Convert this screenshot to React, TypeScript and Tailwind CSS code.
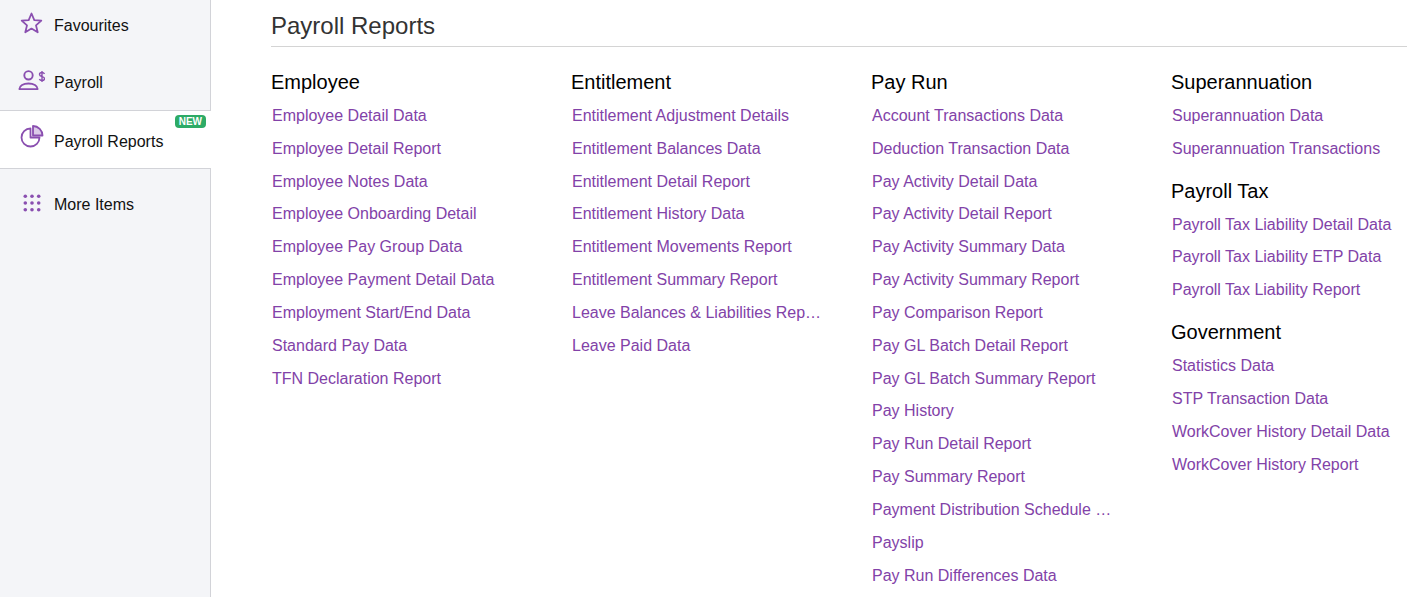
import React from 'react';

const groups: { title: string; links: string[] }[][] = [
  [
    {
      title: 'Employee',
      links: [
        'Employee Detail Data',
        'Employee Detail Report',
        'Employee Notes Data',
        'Employee Onboarding Detail',
        'Employee Pay Group Data',
        'Employee Payment Detail Data',
        'Employment Start/End Data',
        'Standard Pay Data',
        'TFN Declaration Report',
      ],
    },
  ],
  [
    {
      title: 'Entitlement',
      links: [
        'Entitlement Adjustment Details',
        'Entitlement Balances Data',
        'Entitlement Detail Report',
        'Entitlement History Data',
        'Entitlement Movements Report',
        'Entitlement Summary Report',
        'Leave Balances & Liabilities Report',
        'Leave Paid Data',
      ],
    },
  ],
  [
    {
      title: 'Pay Run',
      links: [
        'Account Transactions Data',
        'Deduction Transaction Data',
        'Pay Activity Detail Data',
        'Pay Activity Detail Report',
        'Pay Activity Summary Data',
        'Pay Activity Summary Report',
        'Pay Comparison Report',
        'Pay GL Batch Detail Report',
        'Pay GL Batch Summary Report',
        'Pay History',
        'Pay Run Detail Report',
        'Pay Summary Report',
        'Payment Distribution Schedule Report',
        'Payslip',
        'Pay Run Differences Data',
      ],
    },
  ],
  [
    { title: 'Superannuation', links: ['Superannuation Data', 'Superannuation Transactions'] },
    {
      title: 'Payroll Tax',
      links: ['Payroll Tax Liability Detail Data', 'Payroll Tax Liability ETP Data', 'Payroll Tax Liability Report'],
    },
    {
      title: 'Government',
      links: ['Statistics Data', 'STP Transaction Data', 'WorkCover History Detail Data', 'WorkCover History Report'],
    },
  ],
];

function StarIcon() {
  return (
    <svg width="24" height="24" viewBox="0 0 24 24" fill="none" stroke="#8a4fb0" strokeWidth="1.8" strokeLinejoin="round">
      <path d="M11.5 1.500l2.800 6.600 7 .6-5.300 4.700 1.700 6.900-6.200-3.700-6.200 3.700 1.700-6.900-5.300-4.700 7-.6z" />
    </svg>
  );
}

function PayrollIcon() {
  return (
    <svg width="28" height="22" viewBox="0 0 28 22" fill="none" stroke="#8a4fb0" strokeWidth="1.9">
      <circle cx="11.5" cy="6.300" r="4.200" />
      <path d="M2.400 20.100c0-3.400 4-5.600 9.100-5.600s9.100 2.200 9.100 5.600z" strokeLinejoin="round" />
      <path d="M27.500 5c-.4-1-1.300-1.500-2.500-1.500-1.500 0-2.500.8-2.500 2 0 2.800 5 1.400 5 4 0 1.200-1 2-2.500 2-1.300 0-2.200-.5-2.600-1.500M25 2v11" strokeWidth="1.400" />
    </svg>
  );
}

function PieIcon() {
  return (
    <svg width="24" height="24" viewBox="0 0 24 24" fill="none" stroke="#8a4fb0" strokeWidth="1.8" strokeLinejoin="round">
      <path d="M10.500 3.500a9 9 0 1 0 9 9h-9z" />
      <path d="M13 1a9.500 9.500 0 0 1 9.500 9.500h-9.500z" fill="#dccbe8" />
    </svg>
  );
}

function DotsIcon() {
  return (
    <svg width="18" height="18" viewBox="0 0 18 18" fill="#8a4fb0">
      {[2.300, 9, 15.700].map((y) => [2.300, 9, 15.700].map((x) => <circle key={`${x}-${y}`} cx={x} cy={y} r="1.800" />))}
    </svg>
  );
}

export default function App() {
  return (
    <div className="flex h-[597px] w-[1407px] overflow-hidden bg-white font-['Liberation_Sans',Arial,sans-serif]">
      {/* Side nav */}
      <aside className="flex w-[211px] shrink-0 flex-col bg-[#f4f5f8] border-r border-[#d2d3d8]">
        <div className="flex h-[51px] shrink-0 items-center">
          <span className="flex w-[54px] justify-center pl-[9px] pb-[4px]"><StarIcon /></span>
          <span className="text-base text-[#111]">Favourites</span>
        </div>
        <div className="flex h-[60px] shrink-0 items-center border-b border-[#d2d3d8] pt-[5px]">
          <span className="flex w-[54px] justify-center pl-[7px] pb-[6px]"><PayrollIcon /></span>
          <span className="text-base text-[#111]">Payroll</span>
        </div>
        <div className="relative -mr-px flex h-[58px] shrink-0 items-center border-b border-[#d2d3d8] bg-white">
          <span className="flex w-[54px] justify-center pl-[9px] pb-[6px]"><PieIcon /></span>
          <span className="pt-[4px] text-base text-[#111]">Payroll Reports</span>
          <span className="absolute right-[5px] top-[4px] rounded-sm bg-[#2dab66] px-[4px] text-[10px] font-bold leading-[13px] text-white">NEW</span>
        </div>
        <div className="flex h-[70px] shrink-0 items-center pt-[1px]">
          <span className="flex w-[54px] justify-center pl-[9px] pb-[4px]"><DotsIcon /></span>
          <span className="text-base text-[#111]">More Items</span>
        </div>
      </aside>

      {/* Reports */}
      <main className="min-w-0 flex-1 pl-[60px] pt-[11px]">
        <h1 className="h-[36px] border-b border-[#d4d4d4] text-2xl leading-[30px] text-[#333]">Payroll Reports</h1>
        <div className="grid grid-cols-[300px_300px_300px_236px] pt-[20px]">
          {groups.map((col, i) => (
            <div key={i} className="flex flex-col gap-[11.25px]">
              {col.map((group) => (
                <section key={group.title}>
                  <h2 className="h-[31.82px] text-xl leading-[30px] text-black">{group.title}</h2>
                  <ul>
                    {group.links.map((link) => (
                      <li key={link} className="h-[32.85px] w-[251px] truncate pl-px text-base leading-[33px] text-[#8242a8]">
                        {link}
                      </li>
                    ))}
                  </ul>
                </section>
              ))}
            </div>
          ))}
        </div>
      </main>
    </div>
  );
}
